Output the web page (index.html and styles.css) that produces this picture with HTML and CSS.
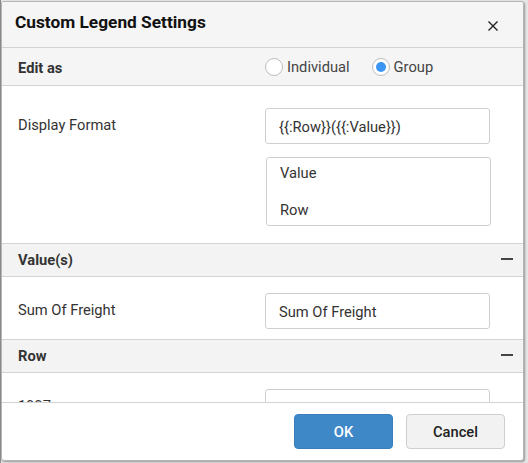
FILE: index.html
```html
<!DOCTYPE html>
<html>
<head>
<meta charset="utf-8">
<link rel="stylesheet" href="styles.css">
</head>
<body>
<div class="dialog">
  <div class="header">
    <div class="title">Custom Legend Settings</div>
    <div class="close">
      <svg width="12" height="12" viewBox="0 0 12 12"><path d="M1.5 1.5L10.5 10.5M10.5 1.5L1.5 10.5" stroke="#222" stroke-width="1.4" fill="none"/></svg>
    </div>
  </div>
  <div class="scroll">
    <div class="edit-row">
      <div class="edit-label">Edit as</div>
      <div class="radios">
        <label class="radio"><span class="circle"></span><span>Individual</span></label>
        <label class="radio"><span class="circle checked"></span><span>Group</span></label>
      </div>
    </div>
    <div class="row format-row">
      <div class="label">Display Format</div>
      <div class="field-col">
        <div class="input">{{:Row}}({{:Value}})</div>
        <div class="list">
          <div class="list-item">Value</div>
          <div class="list-item">Row</div>
        </div>
      </div>
    </div>
    <div class="section">
      <span>Value(s)</span>
      <span class="minus"></span>
    </div>
    <div class="row">
      <div class="label">Sum Of Freight</div>
      <div class="field-col">
        <div class="input">Sum Of Freight</div>
      </div>
    </div>
    <div class="section">
      <span>Row</span>
      <span class="minus"></span>
    </div>
    <div class="row">
      <div class="label">1997</div>
      <div class="field-col">
        <div class="input">1997</div>
      </div>
    </div>
  </div>
  <div class="footer">
    <button class="btn ok">OK</button>
    <button class="btn cancel">Cancel</button>
  </div>
</div>
</body>
</html>
```
FILE: styles.css
```css
* { box-sizing: border-box; }
html, body {
  margin: 0;
  padding: 0;
  width: 528px;
  height: 463px;
  overflow: hidden;
  background: #e6e6e6;
  font-family: Roboto, "Liberation Sans", sans-serif;
}
body {
  padding: 1px 0 0 0;
  border-left: 1px solid #8a8a8a;
}
.dialog {
  width: 523px;
  height: 460px;
  background: #fff;
  border: 1px solid #b5b5b5;
  border-radius: 3px;
  box-shadow: 1px 1px 2px rgba(0,0,0,0.35);
  display: flex;
  flex-direction: column;
  overflow: hidden;
}
.header {
  height: 46px;
  flex: none;
  background: #f5f5f5;
  border-bottom: 1px solid #d3d3d3;
  display: flex;
  align-items: center;
  justify-content: space-between;
  padding: 0 24px 0 13px;
}
.title {
  font-size: 17.3px;
  font-weight: 700;
  color: #111;
  margin-top: -5px;
}
.close { display: flex; margin-top: 2px; }
.scroll {
  flex: 1;
  overflow: hidden;
}
.edit-row {
  height: 38px;
  background: #f5f5f5;
  border-bottom: 1px solid #d3d3d3;
  display: flex;
  align-items: center;
  padding-left: 16px;
}
.edit-label {
  font-size: 14.7px;
  font-weight: 700;
  color: #333;
  width: 247px;
  margin-top: 2px;
}
.radios {
  display: flex;
  gap: 22px;
  font-size: 14.7px;
  color: #444;
}
.radio {
  display: flex;
  align-items: center;
  gap: 4px;
}
.circle {
  width: 18px;
  height: 18px;
  border-radius: 50%;
  border: 1px solid #bdbdbd;
  background: #fff;
  position: relative;
}
.circle.checked::after {
  content: "";
  position: absolute;
  left: 3px;
  top: 3px;
  width: 10px;
  height: 10px;
  border-radius: 50%;
  background: #3b95f5;
}
.row {
  display: flex;
  padding: 16px 0 10px 16px;
  border-bottom: 1px solid #d3d3d3;
}
.format-row { padding-top: 22px; padding-bottom: 17px; }
.label {
  width: 247px;
  font-size: 14.7px;
  color: #333;
  padding-top: 8px;
}
.field-col {
  display: flex;
  flex-direction: column;
  gap: 13px;
}
.input {
  width: 225px;
  height: 36px;
  border: 1px solid #cfcfcf;
  border-radius: 3px;
  font-size: 14.7px;
  color: #333;
  padding: 2px 13px 0;
  display: flex;
  align-items: center;
}
.list {
  width: 225px;
  height: 69px;
  border: 1px solid #cfcfcf;
  border-radius: 3px;
  padding: 5px 13px;
  font-size: 14.7px;
  color: #333;
  display: flex;
  flex-direction: column;
  justify-content: space-between;
  margin-left: 1px;
}
.list-item { line-height: 20px; }
.section {
  height: 33px;
  background: #f3f3f3;
  border-bottom: 1px solid #d3d3d3;
  display: flex;
  align-items: center;
  justify-content: space-between;
  padding: 0 10px 0 16px;
  font-size: 14.7px;
  font-weight: 700;
  color: #333;
}
.minus {
  width: 12px;
  height: 2px;
  background: #444;
  margin-top: -3px;
}
.footer {
  height: 58px;
  flex: none;
  border-top: 1px solid #d3d3d3;
  display: flex;
  justify-content: flex-end;
  align-items: flex-start;
  gap: 13px;
  padding: 11px 18px 0 0;
}
.btn {
  width: 99px;
  height: 35px;
  border-radius: 4px;
  font-family: Roboto, "Liberation Sans", sans-serif;
  font-size: 14.7px;
  font-weight: 500;
}
.ok {
  background: #3f88c8;
  border: 1px solid #3a7fbd;
  color: #fff;
}
.cancel {
  background: #f2f2f2;
  border: 1px solid #cfcfcf;
  color: #222;
}
```
